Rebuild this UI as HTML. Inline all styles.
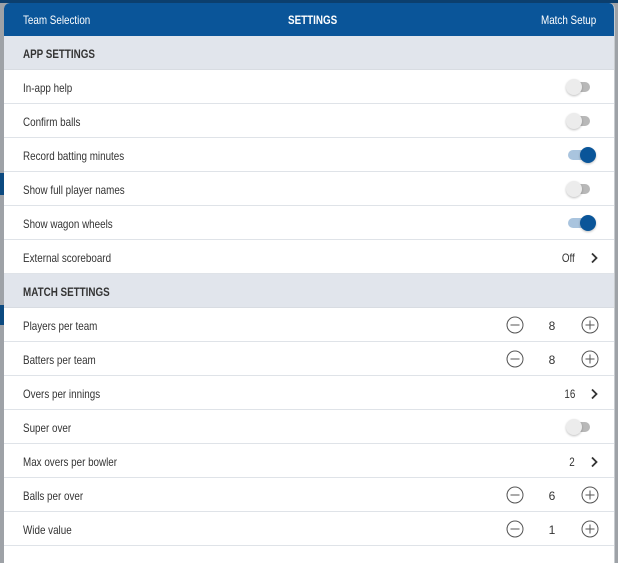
<!DOCTYPE html>
<html><head><style>
*{margin:0;padding:0;box-sizing:border-box}
body{width:618px;height:552px;overflow:hidden;background:#9ea2a7;font-family:"Liberation Sans",sans-serif;position:relative}
.top{position:absolute;left:0;top:0;width:618px;height:3px;background:#0c3f6e}
.lb{position:absolute;left:0;width:5px;background:#0c4a80}
.modal{position:absolute;left:4px;top:3px;width:611px;height:560px;background:#fff;border-radius:6px 6px 0 0;overflow:hidden;border-right:1px solid #c8ccd0}
.t{display:inline-block;transform:scaleX(.82);transform-origin:0 0;white-space:nowrap}
.tr{display:inline-block;transform:scaleX(.82);transform-origin:100% 0;white-space:nowrap}
.hdr{height:33px;background:#0a5599;color:#fff;font-size:12px;position:relative}
.hdr span.p{position:absolute;top:10px}
.sec{height:34px;background:#e1e5ec;color:#333;font-size:12px;font-weight:bold;padding:11px 0 0 19px;border-bottom:1px solid #d8dce2}
.row{height:34px;border-bottom:1px solid #dfe3e8;font-size:12px;color:#333;position:relative;padding:11px 0 0 19px}
.tg{position:absolute;top:12px;left:564px;width:22px;height:10px;border-radius:5px;background:#b8b8b8}
.tg i{position:absolute;top:-3px;left:-2px;width:16px;height:16px;border-radius:50%;background:#ececec;box-shadow:0 1px 2px rgba(0,0,0,.25)}
.tg.on{background:#a9c4de}
.tg.on i{left:12px;background:#0a5599}
.val{position:absolute;right:39px;top:11px}
.chev{position:absolute;left:585px;top:12px}
.num{position:absolute;left:542px;width:12px;text-align:center;top:11px}
.ic{position:absolute;top:8px}
</style></head><body>
<div class="top"></div>
<div class="lb" style="top:173px;height:22px"></div>
<div class="lb" style="top:305px;height:20px"></div>
<div class="modal">
<div class="hdr"><span class="p t" style="left:19px">Team Selection</span><span class="p t" style="left:284px;font-weight:bold">SETTINGS</span><span class="p t" style="left:537px">Match Setup</span></div>
<div class="sec"><span class="t">APP SETTINGS</span></div>
<div class="row"><span class="t">In-app help</span><div class="tg"><i></i></div></div>
<div class="row"><span class="t">Confirm balls</span><div class="tg"><i></i></div></div>
<div class="row"><span class="t">Record batting minutes</span><div class="tg on"><i></i></div></div>
<div class="row"><span class="t">Show full player names</span><div class="tg"><i></i></div></div>
<div class="row"><span class="t">Show wagon wheels</span><div class="tg on"><i></i></div></div>
<div class="row"><span class="t">External scoreboard</span><span class="val tr">Off</span><svg class="chev" width="10" height="12"><path d="M3 1.5 L7.5 6 L3 10.5" stroke="#333" stroke-width="1.8" fill="none"/></svg></div>
<div class="sec"><span class="t">MATCH SETTINGS</span></div>
<div class="row"><span class="t">Players per team</span><svg class="ic" style="left:502px" width="18" height="18"><circle cx="9" cy="9" r="8" stroke="#555" fill="none"/><path d="M4.5 9h9" stroke="#555"/></svg><span class="num">8</span><svg class="ic" style="left:577px" width="18" height="18"><circle cx="9" cy="9" r="8" stroke="#555" fill="none"/><path d="M4.5 9h9M9 4.5v9" stroke="#555"/></svg></div>
<div class="row"><span class="t">Batters per team</span><svg class="ic" style="left:502px" width="18" height="18"><circle cx="9" cy="9" r="8" stroke="#555" fill="none"/><path d="M4.5 9h9" stroke="#555"/></svg><span class="num">8</span><svg class="ic" style="left:577px" width="18" height="18"><circle cx="9" cy="9" r="8" stroke="#555" fill="none"/><path d="M4.5 9h9M9 4.5v9" stroke="#555"/></svg></div>
<div class="row"><span class="t">Overs per innings</span><span class="val tr">16</span><svg class="chev" width="10" height="12"><path d="M3 1.5 L7.5 6 L3 10.5" stroke="#333" stroke-width="1.8" fill="none"/></svg></div>
<div class="row"><span class="t">Super over</span><div class="tg"><i></i></div></div>
<div class="row"><span class="t">Max overs per bowler</span><span class="val tr">2</span><svg class="chev" width="10" height="12"><path d="M3 1.5 L7.5 6 L3 10.5" stroke="#333" stroke-width="1.8" fill="none"/></svg></div>
<div class="row"><span class="t">Balls per over</span><svg class="ic" style="left:502px" width="18" height="18"><circle cx="9" cy="9" r="8" stroke="#555" fill="none"/><path d="M4.5 9h9" stroke="#555"/></svg><span class="num">6</span><svg class="ic" style="left:577px" width="18" height="18"><circle cx="9" cy="9" r="8" stroke="#555" fill="none"/><path d="M4.5 9h9M9 4.5v9" stroke="#555"/></svg></div>
<div class="row"><span class="t">Wide value</span><svg class="ic" style="left:502px" width="18" height="18"><circle cx="9" cy="9" r="8" stroke="#555" fill="none"/><path d="M4.5 9h9" stroke="#555"/></svg><span class="num">1</span><svg class="ic" style="left:577px" width="18" height="18"><circle cx="9" cy="9" r="8" stroke="#555" fill="none"/><path d="M4.5 9h9M9 4.5v9" stroke="#555"/></svg></div>
<div class="row"></div>
</div>
</body></html>
